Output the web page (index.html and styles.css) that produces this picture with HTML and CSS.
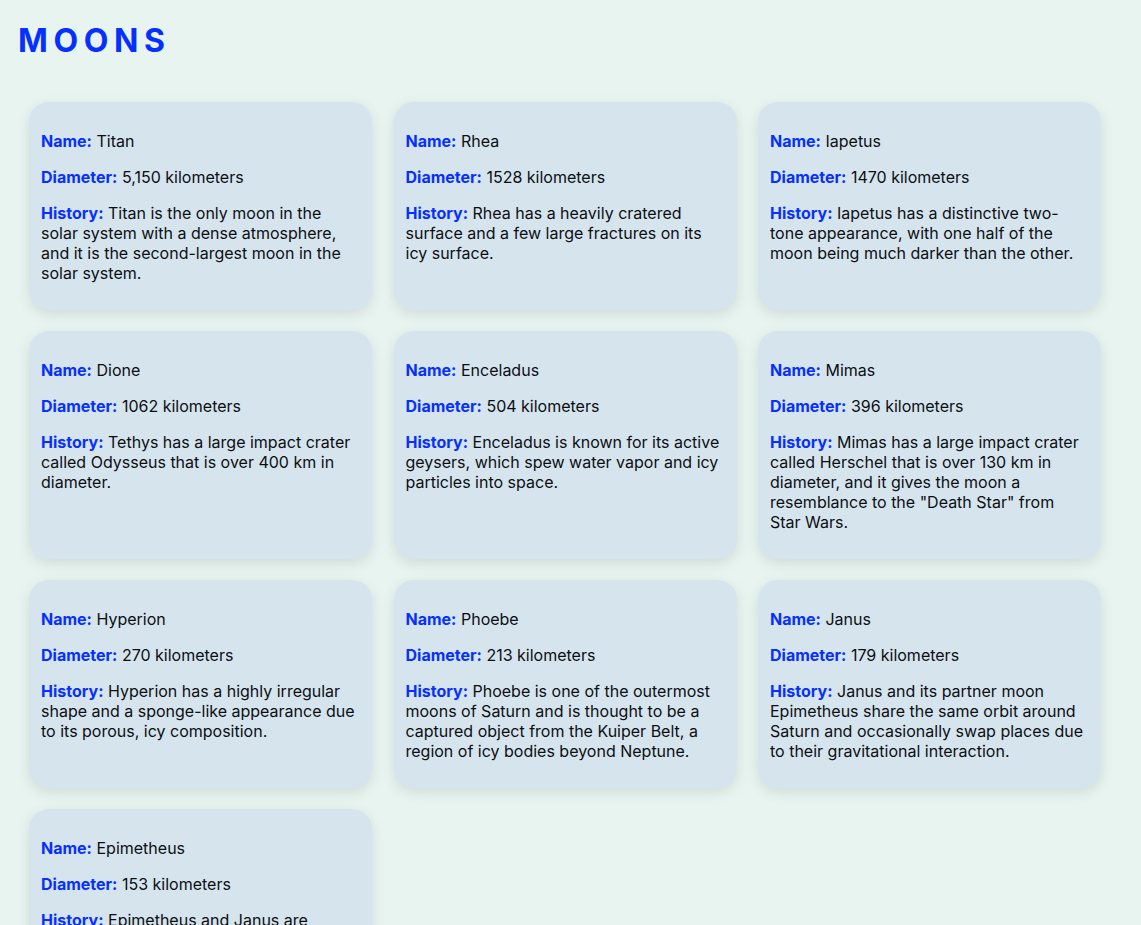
FILE: index.html
```html
<!DOCTYPE html>
<html lang="en">
<head>
<meta charset="utf-8">
<title>Moons</title>
<link rel="stylesheet" href="styles.css">
</head>
<body>
<h1 class="title">MOONS</h1>
<div class="grid">
  <div class="card">
    <p><b>Name:</b> Titan</p>
    <p><b>Diameter:</b> 5,150 kilometers</p>
    <p><b>History:</b> Titan is the only moon in the solar system with a dense atmosphere, and it is the second-largest moon in the solar system.</p>
  </div>
  <div class="card">
    <p><b>Name:</b> Rhea</p>
    <p><b>Diameter:</b> 1528 kilometers</p>
    <p><b>History:</b> Rhea has a heavily cratered surface and a few large fractures on its icy surface.</p>
  </div>
  <div class="card">
    <p><b>Name:</b> Iapetus</p>
    <p><b>Diameter:</b> 1470 kilometers</p>
    <p><b>History:</b> Iapetus has a distinctive two-tone appearance, with one half of the moon being much darker than the other.</p>
  </div>
  <div class="card">
    <p><b>Name:</b> Dione</p>
    <p><b>Diameter:</b> 1062 kilometers</p>
    <p><b>History:</b> Tethys has a large impact crater called Odysseus that is over 400 km in diameter.</p>
  </div>
  <div class="card">
    <p><b>Name:</b> Enceladus</p>
    <p><b>Diameter:</b> 504 kilometers</p>
    <p><b>History:</b> Enceladus is known for its active geysers, which spew water vapor and icy particles into space.</p>
  </div>
  <div class="card">
    <p><b>Name:</b> Mimas</p>
    <p><b>Diameter:</b> 396 kilometers</p>
    <p><b>History:</b> Mimas has a large impact crater called Herschel that is over 130 km in diameter, and it gives the moon a resemblance to the "Death Star" from Star Wars.</p>
  </div>
  <div class="card">
    <p><b>Name:</b> Hyperion</p>
    <p><b>Diameter:</b> 270 kilometers</p>
    <p><b>History:</b> Hyperion has a highly irregular shape and a sponge-like appearance due to its porous, icy composition.</p>
  </div>
  <div class="card">
    <p><b>Name:</b> Phoebe</p>
    <p><b>Diameter:</b> 213 kilometers</p>
    <p><b>History:</b> Phoebe is one of the outermost moons of Saturn and is thought to be a captured object from the Kuiper Belt, a region of icy bodies beyond Neptune.</p>
  </div>
  <div class="card">
    <p><b>Name:</b> Janus</p>
    <p><b>Diameter:</b> 179 kilometers</p>
    <p><b>History:</b> Janus and its partner moon Epimetheus share the same orbit around Saturn and occasionally swap places due to their gravitational interaction.</p>
  </div>
  <div class="card">
    <p><b>Name:</b> Epimetheus</p>
    <p><b>Diameter:</b> 153 kilometers</p>
    <p><b>History:</b> Epimetheus and Janus are co&#8209;orbital moons, meaning they share the same orbit and periodically exchange positions.</p>
  </div>
</div>
</body>
</html>
```
FILE: styles.css
```css
html, body {
  margin: 0;
  padding: 0;
  background: #e8f4f0;
  font-family: Inter, "Noto Sans", sans-serif;
  color: #0c0f12;
}
body {
  padding: 0 18px;
}
.title {
  margin: 0;
  padding: 22px 0 0;
  height: 80px;
  box-sizing: border-box;
  font-size: 32px;
  line-height: 38px;
  font-weight: 700;
  letter-spacing: 0.175em;
  color: #0530ff;
}
.grid {
  margin: 22px 0 0 11px;
  width: 1072px;
  display: grid;
  grid-template-columns: repeat(3, 1fr);
  gap: 21px 21.5px;
}
.card {
  background: #d6e4ee;
  border-radius: 20px;
  padding: 13px 12px 11px;
  box-shadow: 0 4px 14px rgba(0, 0, 0, 0.1);
}
.card p {
  margin: 16px 0;
  font-size: 16px;
  line-height: 20px;
}
.card b {
  color: #0530ff;
  font-weight: 700;
}
```
